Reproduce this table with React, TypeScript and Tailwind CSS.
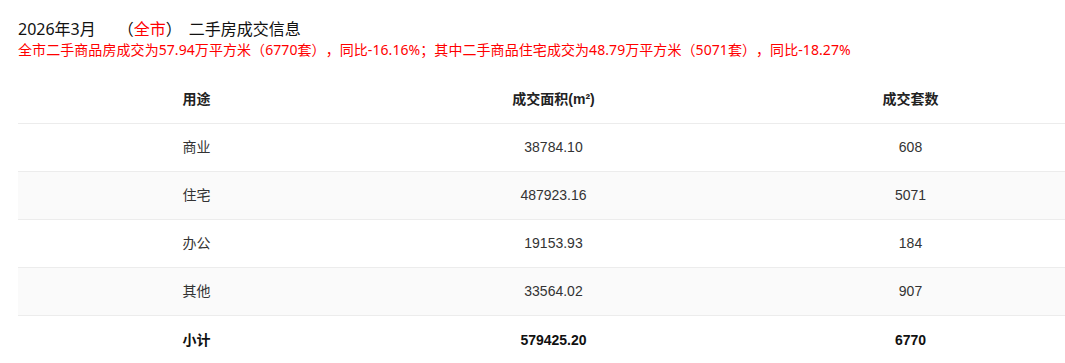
const rows = [
  { use: '商业', area: '38784.10', count: '608' },
  { use: '住宅', area: '487923.16', count: '5071' },
  { use: '办公', area: '19153.93', count: '184' },
  { use: '其他', area: '33564.02', count: '907' },
];

const cjk = 'font-["Noto_Sans","Noto_Sans_CJK_SC",sans-serif] [text-spacing-trim:space-all]';
const tableFont = 'font-["Liberation_Sans","Noto_Sans_CJK_SC",sans-serif]';

function Row({ cells, className }: { cells: string[]; className?: string }) {
  return (
    <div className={`grid grid-cols-[357px_357px_357px] h-[48px] border-b border-[#ececec] items-center ${className ?? ''}`}>
      {cells.map((c, i) => (
        <div key={i} className="text-center">
          {c}
        </div>
      ))}
    </div>
  );
}

export default function App() {
  return (
    <div className="w-[1065px] h-[363px] overflow-hidden bg-white pl-[18px] pt-[18px]">
      <div className={`${cjk} text-[16px] leading-[23px] text-[#111] whitespace-nowrap`}>
        2026年3月
        <span className="ml-[22px]">（</span>
        <span className="text-[#f00]">全市</span>
        <span>）</span>
        <span className="ml-[7px]">二手房成交信息</span>
      </div>
      <div className={`${cjk} text-[14px] leading-[18px] tracking-[0.07px] text-[#f00] whitespace-nowrap`}>
        全市二手商品房成交为57.94万平方米（6770套），同比-16.16%；其中二手商品住宅成交为48.79万平方米（5071套），同比-18.27%
      </div>
      <div className={`mt-[17px] w-[1071px] ${tableFont} text-[14px] text-[#333]`}>
        <Row cells={['用途', '成交面积(m²)', '成交套数']} className="font-semibold text-[#222]" />
        {rows.map((r, i) => (
          <Row
            key={r.use}
            cells={[r.use, r.area, r.count]}
            className={i % 2 === 1 ? 'bg-[#fafafa]' : ''}
          />
        ))}
        <Row cells={['小计', '579425.20', '6770']} className="font-bold text-[#111] border-b-0" />
      </div>
    </div>
  );
}
